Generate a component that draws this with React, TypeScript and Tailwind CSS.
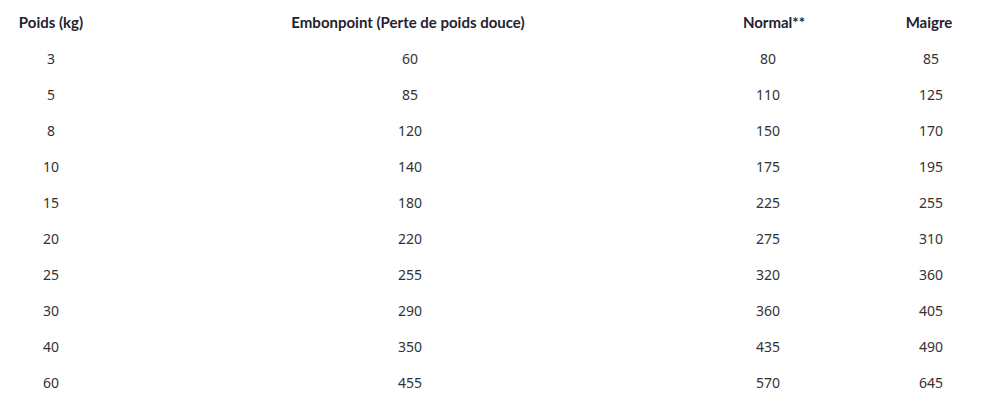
const rows: [string, string, string, string][] = [
  ['3', '60', '80', '85'],
  ['5', '85', '110', '125'],
  ['8', '120', '150', '170'],
  ['10', '140', '175', '195'],
  ['15', '180', '225', '255'],
  ['20', '220', '275', '310'],
  ['25', '255', '320', '360'],
  ['30', '290', '360', '405'],
  ['40', '350', '435', '490'],
  ['60', '455', '570', '645'],
]

const headers = ['Poids (kg)', 'Embonpoint (Perte de poids douce)', 'Normal**', 'Maigre']

// per-column padding so the centred text lands where the reference has it
const colPad = ['pl-0', 'pl-[4px]', 'pr-[10px]', 'pl-[44px]']
const headPad = ['pl-0', 'pl-[0px]', 'pl-[2px]', 'pl-[40px]']

export default function App() {
  return (
    <div className="w-[986px] h-[405px] bg-white pt-[4px] overflow-hidden">
      <div className="grid grid-cols-[102px_612px_118px_154px]">
        {headers.map((h, i) => (
          <div
            key={h}
            className={`h-[36px] flex items-center justify-center text-[15px] font-bold text-[#23232f] font-['Lato',sans-serif] ${headPad[i]}`}
          >
            {h}
          </div>
        ))}
        {rows.map((r) =>
          r.map((v, i) => (
            <div
              key={`${r[0]}-${i}`}
              className={`h-[36px] flex items-center justify-center text-[14px] text-[#333333] font-['Noto_Sans',sans-serif] ${colPad[i]}`}
            >
              {v}
            </div>
          ))
        )}
      </div>
    </div>
  )
}
